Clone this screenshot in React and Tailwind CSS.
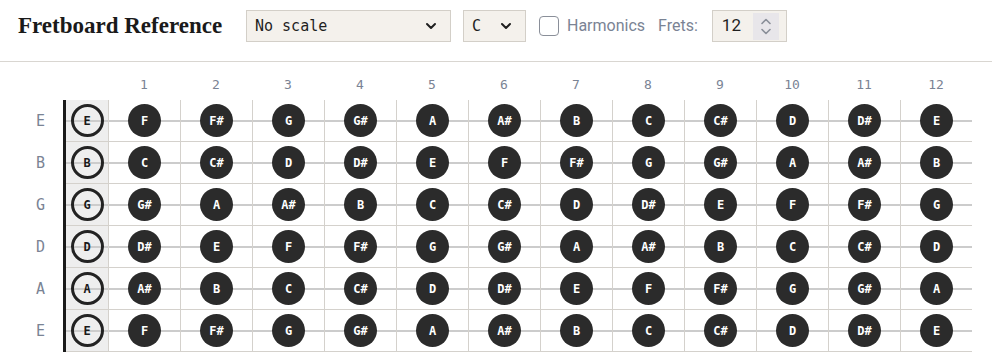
import React from 'react';

const NOTES = ['C', 'C#', 'D', 'D#', 'E', 'F', 'F#', 'G', 'G#', 'A', 'A#', 'B'];
const STRINGS = ['E', 'B', 'G', 'D', 'A', 'E'];
const FRETS = Array.from({ length: 12 }, (_, i) => i + 1);

const mono = "font-['DejaVu_Sans_Mono','Liberation_Mono',monospace]";

function noteAt(open, fret) {
  return NOTES[(NOTES.indexOf(open) + fret) % 12];
}

function Chevron({ className = '' }) {
  return (
    <svg width="12" height="8" viewBox="0 0 12 8" className={className}>
      <path d="M2 2l4 4 4-4" fill="none" stroke="currentColor" strokeWidth="2" strokeLinecap="round" strokeLinejoin="round" />
    </svg>
  );
}

function Select({ value, width }) {
  return (
    <div className={`flex items-center justify-between h-[32px] px-[8px] bg-[#f4f1ec] border border-[#d3cfc8] ${width}`}>
      <span className={`${mono} text-[15px] text-[#1f1f1f]`}>{value}</span>
      <Chevron className="text-[#1f1f1f] mr-[5px]" />
    </div>
  );
}

export default function App() {
  return (
    <div className="w-[992px] h-[363px] bg-white overflow-hidden">
      {/* Header */}
      <div className="flex items-start pt-[10px] h-[62px] px-[18px] border-b border-[#d9d6d1]">
        <h1 className="font-['Liberation_Serif',serif] font-bold text-[23px] leading-[32px] text-[#1a1a1a] w-[228px]">
          Fretboard Reference
        </h1>
        <Select value="No scale" width="w-[205px]" />
        <div className="w-[12px]" />
        <Select value="C" width="w-[63px]" />
        <div className="flex items-center h-[32px] ml-[13px] gap-[8px] font-['Roboto','Liberation_Sans',sans-serif] text-[16px] text-[#7a8394]">
          <div className="w-[20px] h-[20px] rounded-[4px] border border-[#8a8f99] bg-white" />
          <span>Harmonics</span>
          <span className="ml-[5px]">Frets:</span>
        </div>
        <div className="flex items-center ml-[14px] h-[32px] w-[75px] bg-[#f4f1ec] border border-[#d3cfc8] pl-[9px] pr-[7px]">
          <span className="font-['Roboto','Liberation_Sans',sans-serif] text-[17px] text-[#1f1f1f] flex-1">12</span>
          <div className="flex flex-col items-center justify-center gap-[3px] w-[26px] h-[27px] bg-[#e8e6ea] text-[#8a8f99]">
            <svg width="12" height="7" viewBox="0 0 12 7"><path d="M2 5.5l4-4 4 4" fill="none" stroke="currentColor" strokeWidth="1.6" strokeLinecap="round" strokeLinejoin="round" /></svg>
            <svg width="12" height="7" viewBox="0 0 12 7"><path d="M2 1.5l4 4 4-4" fill="none" stroke="currentColor" strokeWidth="1.6" strokeLinecap="round" strokeLinejoin="round" /></svg>
          </div>
        </div>
      </div>

      {/* Fret numbers */}
      <div className="flex h-[38px] items-center pt-[8px] pl-[108px]">
        {FRETS.map((f) => (
          <div key={f} className={`w-[72px] text-center ${mono} text-[13px] text-[#7a8394]`}>
            {f}
          </div>
        ))}
      </div>

      {/* Fretboard */}
      <div className="flex flex-col">
        {STRINGS.map((s, i) => (
          <div key={i} className="flex h-[42px]">
            <div className={`w-[63px] flex items-center justify-end pr-[18px] ${mono} text-[15px] text-[#7a8394]`}>
              {s}
            </div>
            <div className="w-[3px] bg-[#1a1a1a]" />
            <div className="flex w-[906px] border-b border-[#d4d1cc]">
              <div className="relative w-[42px] bg-[#eeeeee] flex items-center justify-center">
                <div className="absolute left-0 right-0 top-1/2 -translate-y-1/2 h-[2px] bg-[#cccccc]" />
                <div className={`relative w-[33px] h-[33px] rounded-full border-[3px] border-solid border-[#222222] flex items-center justify-center ${mono} font-bold text-[12px] text-[#1a1a1a]`}>
                  {s}
                </div>
              </div>
              {FRETS.map((f) => (
                <div key={f} className="relative w-[72px] border-l border-[#d4d1cc] flex items-center justify-center">
                  <div className="absolute left-0 right-0 top-1/2 -translate-y-1/2 h-[2px] bg-[#cccccc]" />
                  <div className={`relative w-[33px] h-[33px] rounded-full bg-[#2b2b2b] flex items-center justify-center ${mono} font-bold text-[12px] text-white`}>
                    {noteAt(s, f)}
                  </div>
                </div>
              ))}
            </div>
          </div>
        ))}
      </div>
    </div>
  );
}
